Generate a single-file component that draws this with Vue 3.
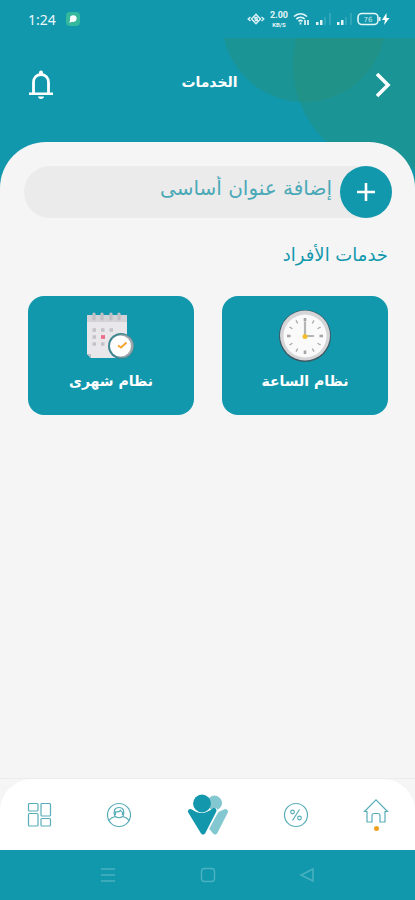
<script setup>
import { ref } from 'vue'

const address = ref('')
const hourTicks = Array.from({ length: 12 }, (_, i) => i * 30)
</script>

<template>
  <div class="app">
    <header class="top">
      <svg class="bubbles" viewBox="0 0 195 152" aria-hidden="true">
        <circle cx="84" cy="-18" r="82" />
        <circle cx="178" cy="27" r="105" />
      </svg>

      <div class="status">
        <div class="status-group">
          <span class="time">1:24</span>
          <svg width="14" height="14" viewBox="0 0 14 14" aria-hidden="true">
            <rect width="14" height="14" rx="4" fill="#35b89b" />
            <circle cx="7.300" cy="6.600" r="3.300" fill="#fff" />
            <path d="M4.500 7 3.300 10.800 7 9.500Z" fill="#fff" />
          </svg>
        </div>
        <div class="status-group icons">
          <svg width="18" height="12" viewBox="0 0 18 12" fill="none" stroke="#e4f5f7" stroke-width="1.300" aria-hidden="true">
            <path d="M3.500 4 1.200 6 3.500 8M14.500 4 16.800 6 14.500 8" />
            <path d="M9 1.200 13.500 6 9 10.800 4.500 6Z" />
            <path d="M10.500 4.300H8V6h2.300v1.700H7.600" />
          </svg>
          <span class="speed"><b>2.00</b><b class="unit">KB/S</b></span>
          <svg width="17" height="14" viewBox="0 0 17 14" fill="none" stroke="#e4f5f7" stroke-width="1.700" aria-hidden="true">
            <path d="M1 4.500C5 .8 10 .8 14 4.500M3.300 7c2.500-2.300 6-2.300 8.400 0M5.500 9.300c1.300-1.100 2.800-1.100 4 0" />
            <path d="M7.500 10.500v2M12 8v5M15 13V8" />
          </svg>
          <svg v-for="n in 2" :key="n" width="16" height="14" viewBox="0 0 16 14" aria-hidden="true">
            <path d="M1 10h2.500v3H1zM5 8h2.500v5H5z" fill="#e4f5f7" />
            <path d="M9 5h2v8H9zM14 1h2v12h-2z" fill="#e4f5f7" opacity=".15" />
          </svg>
          <svg width="33" height="14" viewBox="0 0 33 14" aria-hidden="true">
            <rect x="1" y="1.500" width="20" height="11" rx="4" fill="none" stroke="#e4f5f7" stroke-width="1.600" />
            <path d="M22 5h1.500v4H22z" fill="#e4f5f7" />
            <text x="11" y="9.800" text-anchor="middle" font-size="7" fill="#c4e6ea">76</text>
            <path d="M29.500 1 25 8h3l-1 5 5.500-7h-3z" fill="#fff" />
          </svg>
        </div>
      </div>

      <div class="bar">
        <button class="icon-btn" type="button" aria-label="الإشعارات">
          <svg width="26" height="30" viewBox="0 0 26 30" fill="none" aria-hidden="true">
            <path d="M5.500 23V12.500C5.500 7.500 8.700 4.500 13 4.500s7.500 3 7.500 8V23" stroke="#fff" stroke-width="2.800" />
            <path d="M11 4.500V2.500a2 2 0 0 1 4 0v2zM1 22.500h24V25H1zM10 26.500h6c0 3.300-6 3.300-6 0z" fill="#fff" />
          </svg>
        </button>
        <h1>الخدمات</h1>
        <button class="icon-btn back" type="button" aria-label="رجوع">
          <svg width="16" height="26" viewBox="0 0 16 26" fill="none" stroke="#fff" stroke-width="3.600" aria-hidden="true">
            <path d="M2 2 13 13 2 24" />
          </svg>
        </button>
      </div>
    </header>

    <main class="sheet" dir="rtl">
      <form class="address" @submit.prevent>
        <button class="add" type="submit" aria-label="إضافة">
          <svg width="18" height="18" viewBox="0 0 18 18" stroke="#fff" stroke-width="2.600" aria-hidden="true">
            <path d="M9 0v18M0 9h18" />
          </svg>
        </button>
        <input v-model="address" type="text" placeholder="إضافة عنوان أساسى" aria-label="إضافة عنوان أساسى" />
      </form>

      <h2>خدمات الأفراد</h2>

      <div class="cards">
        <button class="card" type="button">
          <svg width="54" height="54" viewBox="0 0 54 54" aria-hidden="true">
            <circle cx="27" cy="27" r="26" fill="#3d5963" />
            <circle cx="27" cy="26.500" r="25" fill="#d5d5d8" />
            <circle cx="27" cy="27" r="21.500" fill="#fbfafa" />
            <path
              v-for="a in hourTicks"
              :key="a"
              d="M27 9v3.500"
              stroke="#a3a5a8"
              :stroke-width="a % 90 ? 1.200 : 2.600"
              :transform="`rotate(${a} 27 27)`"
            />
            <path d="M27 27V13M27 27h9" stroke="#b4b5b7" stroke-width="2.200" />
            <circle cx="27" cy="27.500" r="2.500" fill="#f5be2e" />
          </svg>
          <span>نظام الساعة</span>
        </button>

        <button class="card" type="button">
          <svg width="54" height="54" viewBox="5 0 54 54" aria-hidden="true">
            <path d="M8 6h40v43H12l-4-4z" fill="#e9e7ea" />
            <path d="M8 6h40v7H8z" fill="#d3d2d7" />
            <path d="M8 45h4v4z" fill="#bfc0c5" />
            <path d="M15 5v5M23 5v5M32 5v5M40 5v5" stroke="#c0bfc5" stroke-width="3.200" stroke-linecap="round" />
            <path
              d="M13.500 21H17M22 21h3.500M30.500 21H34M13.500 28H17M13.500 35H17M22 35h3.500"
              stroke="#c2c2c8"
              stroke-width="3.500"
            />
            <path d="M22 28h4" stroke="#ee6f8c" stroke-width="3.800" />
            <circle cx="42" cy="37" r="13" fill="#3f8791" />
            <circle cx="43" cy="37" r="11.500" fill="#9ba6aa" />
            <circle cx="41.500" cy="37" r="10.500" fill="#fff" />
            <path d="M39 36.500l3 2 5.500-5" fill="none" stroke="#f3a52f" stroke-width="1.900" />
          </svg>
          <span>نظام شهرى</span>
        </button>
      </div>
    </main>

    <nav class="tabs">
      <a href="#menu" aria-label="القائمة">
        <svg width="26" height="26" viewBox="0 0 26 26" class="line" aria-hidden="true">
          <rect x="2.500" y="1.500" width="9.500" height="7.500" rx="1" />
          <rect x="15" y="1.500" width="9.500" height="12.500" rx="1" />
          <rect x="2.500" y="11.500" width="9.500" height="12.500" rx="1" />
          <rect x="15" y="16.500" width="9.500" height="7.500" rx="1" />
        </svg>
      </a>
      <a href="#profile" aria-label="الحساب">
        <svg width="26" height="26" viewBox="0 0 26 26" class="line" aria-hidden="true">
          <circle cx="13" cy="13" r="11.500" />
          <path d="M9 14.500c-2-5.500-.5-9 4-9s6 3.500 4 9M9.500 13V9.800q3.500.5 5-1.500 1 1.500 2 2V13M2.800 18.500c2-3 4.700-3.600 6.500-4M23.200 18.500c-2-3-4.700-3.600-6.500-4M9.300 14.500q3.700 2.500 7.400 0" />
        </svg>
      </a>
      <a href="#services" aria-label="الرئيسية">
        <svg width="42" height="42" viewBox="0 0 42 42" aria-hidden="true">
          <g fill="#83c7d1" stroke="#83c7d1">
            <circle cx="27.500" cy="9" r="7" />
            <path d="M38.500 17.500 28 38 23 32 33 20z" stroke-width="5" stroke-linejoin="round" />
          </g>
          <path d="M3.500 17.500c8 5 15 5 24 0L16.500 38z" fill="#fff" stroke="#fff" stroke-width="7" stroke-linejoin="round" />
          <circle cx="15" cy="9.500" r="8.900" fill="#1397ac" />
          <path d="M3.500 17.500c8 5.500 15 5.500 23.500-1L16 38z" fill="#1397ac" stroke="#1397ac" stroke-width="5" stroke-linejoin="round" />
        </svg>
      </a>
      <a href="#offers" aria-label="العروض">
        <svg width="26" height="26" viewBox="0 0 26 26" class="line" aria-hidden="true">
          <circle cx="13" cy="13" r="11.500" />
          <path d="M16.500 7.500 9.500 18.500" />
          <circle cx="9.500" cy="10" r="1.800" />
          <circle cx="16.500" cy="16" r="1.800" />
        </svg>
      </a>
      <a href="#home" aria-label="المنزل" aria-current="page">
        <svg width="26" height="26" viewBox="0 0 26 26" class="line" aria-hidden="true">
          <path d="M1.500 13.500 13 1.800l11.500 11.700h-2.500V24h-5v-6.500q0-2-2-2h-4q-2 0-2 2V24H4V13.500z" />
        </svg>
        <i class="dot"></i>
      </a>
    </nav>

    <footer class="system">
      <button type="button" aria-label="التطبيقات">
        <svg width="16" height="16" viewBox="0 0 16 16" aria-hidden="true"><path d="M1 2h14M1 8h14M1 14h14" /></svg>
      </button>
      <button type="button" aria-label="الشاشة الرئيسية">
        <svg width="16" height="16" viewBox="0 0 16 16" aria-hidden="true"><rect x="1.500" y="1.500" width="13" height="13" rx="3" /></svg>
      </button>
      <button type="button" aria-label="السابق">
        <svg width="16" height="16" viewBox="0 0 16 16" aria-hidden="true"><path d="M14 2v12L2 8z" /></svg>
      </button>
    </footer>
  </div>
</template>

<style>
body {
  background: #f5f5f5;
}
</style>

<style scoped>
.app {
  min-height: 100vh;
  display: flex;
  flex-direction: column;
  font-family: 'DejaVu Sans', sans-serif;
  background: #f5f5f5;
}
button {
  padding: 0;
  border: 0;
  background: none;
  font-family: inherit;
  cursor: pointer;
}
svg {
  display: block;
}
h1,
h2 {
  margin: 0;
}

.top {
  position: relative;
  background: #1298ad;
  padding-bottom: 48px;
}
.bubbles {
  position: absolute;
  top: 38px;
  right: 0;
  width: 195px;
  overflow: hidden;
}
.bubbles circle {
  fill: #2b8f74;
  opacity: 0.4;
}
.status {
  height: 38px;
  padding: 0 25px 0 28px;
  display: flex;
  align-items: center;
  justify-content: space-between;
}
.status-group {
  display: flex;
  align-items: center;
  gap: 10px;
}
.icons {
  gap: 5px;
}
.time {
  font: 14px 'Noto Sans', sans-serif;
  color: #eaf7f9;
}
.speed {
  display: flex;
  flex-direction: column;
  align-items: center;
  font: 9px/11px Roboto, sans-serif;
  color: #e4f5f7;
}
.unit {
  font-size: 6px;
  line-height: 7px;
}
.bar {
  position: relative;
  display: grid;
  grid-template-columns: 28px 1fr 28px;
  align-items: center;
  padding: 32px 24px 42px 28px;
}
.bar h1 {
  font-size: 14px;
  line-height: 20px;
  padding-bottom: 6px;
  text-align: center;
  color: #fff;
}
.back {
  justify-self: end;
}

.sheet {
  position: relative;
  flex: 1;
  margin-top: -48px;
  padding: 24px 27px 24px 28px;
  border-radius: 46px 46px 0 0;
  border-bottom: 1px solid #ececec;
  background: #f5f5f5;
}
.address {
  display: flex;
  align-items: center;
  gap: 8px;
  margin: 0 -4px;
  border-radius: 26px;
  background: #ebebeb;
}
.add {
  width: 52px;
  height: 52px;
  flex: none;
  display: grid;
  place-items: center;
  border-radius: 50%;
  background: #1298ad;
}
.address input {
  flex: 1;
  min-width: 0;
  height: 44px;
  padding: 0 0 8px;
  border: 0;
  outline: 0;
  background: none;
  font: 20px 'DejaVu Sans', sans-serif;
  color: #1298ad;
}
.address input::placeholder {
  color: #4ba9b7;
  opacity: 1;
}
h2 {
  margin-top: 24px;
  font-size: 18px;
  line-height: 26px;
  font-weight: 400;
  color: #1298ad;
}
.cards {
  display: grid;
  grid-template-columns: 1fr 1fr;
  gap: 28px;
  margin-top: 28px;
}
.card {
  height: 119px;
  padding-top: 13px;
  display: flex;
  flex-direction: column;
  align-items: center;
  gap: 6px;
  border-radius: 16px;
  background: #1298ad;
  color: #fff;
  font-size: 14px;
  line-height: 24px;
  font-weight: 700;
}

.tabs {
  height: 71px;
  padding: 0 26px;
  display: flex;
  align-items: center;
  justify-content: space-between;
  border-radius: 32px 32px 0 0;
  background: #fff;
}
.tabs a {
  min-width: 26px;
  display: flex;
  flex-direction: column;
  align-items: center;
  gap: 2px;
}
.line {
  fill: none;
  stroke: #58adb8;
  stroke-width: 1.2;
}
.dot {
  width: 5px;
  height: 5px;
  border-radius: 50%;
  background: #f2a01f;
}
.system {
  height: 50px;
  padding: 0 100px;
  display: flex;
  align-items: center;
  justify-content: space-between;
  background: #1298ad;
}
.system svg {
  fill: none;
  stroke: #49b1c0;
  stroke-width: 1.5;
}
</style>
